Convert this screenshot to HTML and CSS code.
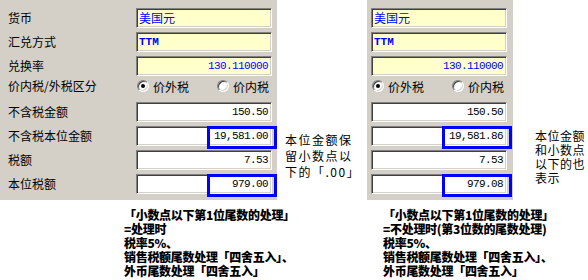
FILE: index.html
```
<!DOCTYPE html>
<html lang="zh">
    <head>
        <meta charset="UTF-8">
        <title>本位金额尾数处理</title>
        <link rel="stylesheet" href="styles.css">
    </head>
    <body>
        <div class="top">
            <div class="panel panel-left">
                <div class="row"><span class="label">货币</span><div class="field field-yellow">美国元</div></div>
                <div class="row"><span class="label">汇兑方式</span><div class="field field-yellow field-code">TTM</div></div>
                <div class="row"><span class="label">兑换率</span><div class="field field-yellow field-num">130.110000</div></div>
                <div class="row radio-row">
                    <span class="label">价内税/外税区分</span>
                    <div class="radios">
                        <span class="radio checked"></span><span class="radio-text">价外税</span>
                        <span class="radio"></span><span class="radio-text">价内税</span>
                    </div>
                </div>
                <div class="row"><span class="label">不含税金额</span><div class="field field-num">150.50</div></div>
                <div class="row"><span class="label">不含税本位金额</span><div class="field field-num">19,581.00<span class="mark"></span></div></div>
                <div class="row"><span class="label">税额</span><div class="field field-num">7.53</div></div>
                <div class="row"><span class="label">本位税额</span><div class="field field-num">979.00<span class="mark"></span></div></div>
            </div>
            <p class="note note-a">本位金额保<br>留小数点以<br>下的「.00」</p>
            <div class="panel panel-right">
                <div class="row"><div class="field field-yellow">美国元</div></div>
                <div class="row"><div class="field field-yellow field-code">TTM</div></div>
                <div class="row"><div class="field field-yellow field-num">130.110000</div></div>
                <div class="row radio-row">
                    <div class="radios">
                        <span class="radio checked"></span><span class="radio-text">价外税</span>
                        <span class="radio"></span><span class="radio-text">价内税</span>
                    </div>
                </div>
                <div class="row"><div class="field field-num">150.50</div></div>
                <div class="row"><div class="field field-num">19,581.86<span class="mark"></span></div></div>
                <div class="row"><div class="field field-num">7.53</div></div>
                <div class="row"><div class="field field-num">979.08<span class="mark"></span></div></div>
            </div>
            <p class="note note-b">本位金额<br>和小数点<br>以下的也<br>表示</p>
        </div>
        <div class="bottom">
            <p class="rule rule-a">「小数点以下第1位尾数的处理」<br>=处理时<br>税率5%、<br>销售税额尾数处理「四舍五入」、<br>外币尾数处理「四舍五入」</p>
            <p class="rule rule-b">「小数点以下第1位尾数的处理」<br>=不处理时(第3位数的尾数处理)<br>税率5%、<br>销售税额尾数处理「四舍五入」、<br>外币尾数处理「四舍五入」</p>
        </div>
    </body>
</html>
```

FILE: styles.css
```
body{
    margin: 0;
    background-color: #FFF;
    color: #000;
    font-family: "Noto Sans CJK SC", "Liberation Sans", sans-serif;
    font-size: 12px;
}
p{
    margin: 0;
}
.top{
    display: flex;
    height: 200px;
}
.panel{
    background-color: #D4D0C8;
    padding-top: 8px;
    box-sizing: border-box;
    height: 200px;
}
.panel-left{
    width: 277px;
    padding-left: 8px;
}
.panel-right{
    width: 146px;
    padding-left: 4px;
}
.row{
    display: flex;
    align-items: center;
    height: 20px;
    margin-bottom: 4px;
}
.radio-row{
    margin-top: -4px;
    margin-bottom: 6px;
}
.label{
    width: 128px;
    flex: none;
    line-height: 20px;
    white-space: nowrap;
}
.field{
    position: relative;
    width: 136px;
    height: 20px;
    box-sizing: border-box;
    background-color: #FFF;
    border-top: 1px solid #808080;
    border-left: 1px solid #808080;
    border-right: 1px solid #FFF;
    border-bottom: 1px solid #FFF;
    box-shadow: inset 1px 1px #404040, inset -1px -1px #D4D0C8;
    padding: 0 3px 0 2px;
    line-height: 18px;
    white-space: nowrap;
}
.field-yellow{
    background-color: #FFFFCC;
    color: #0000FF;
}
.field-code{
    font-family: "Liberation Mono", monospace;
    font-weight: bold;
    font-size: 11px;
}
.field-num{
    text-align: right;
    font-family: "Liberation Mono", monospace;
    font-size: 11px;
    letter-spacing: -0.6px;
}
.mark{
    position: absolute;
    left: 70px;
    top: -1px;
    width: 70px;
    height: 23px;
    box-sizing: border-box;
    border: 3px solid #0000FF;
}
.radios{
    display: flex;
    align-items: center;
    padding-left: 1px;
}
.radio{
    position: relative;
    width: 12px;
    height: 12px;
    box-sizing: border-box;
    border-radius: 50%;
    background-color: #FFF;
    border: 1px solid;
    border-color: #808080 #FFF #FFF #808080;
    box-shadow: inset 1px 1px #404040, inset -1px -1px #D4D0C8;
}
.radio.checked::after{
    content: "";
    position: absolute;
    left: 3px;
    top: 3px;
    width: 4px;
    height: 4px;
    border-radius: 50%;
    background-color: #000;
}
.radio-text{
    margin-left: 4px;
    width: 64px;
}
.note{
    white-space: nowrap;
}
.note-a{
    width: 82px;
    margin-left: 8px;
    padding-top: 132px;
    line-height: 16px;
    letter-spacing: 1.5px;
}
.note-b{
    margin-left: 22px;
    padding-top: 129px;
    line-height: 14px;
    letter-spacing: 0.5px;
}
.bottom{
    display: flex;
    margin-top: 8px;
}
.rule{
    font-weight: 900;
    line-height: 14px;
    letter-spacing: -0.3px;
    white-space: nowrap;
}
.rule-a{
    margin-left: 124px;
    width: 259px;
}
```
